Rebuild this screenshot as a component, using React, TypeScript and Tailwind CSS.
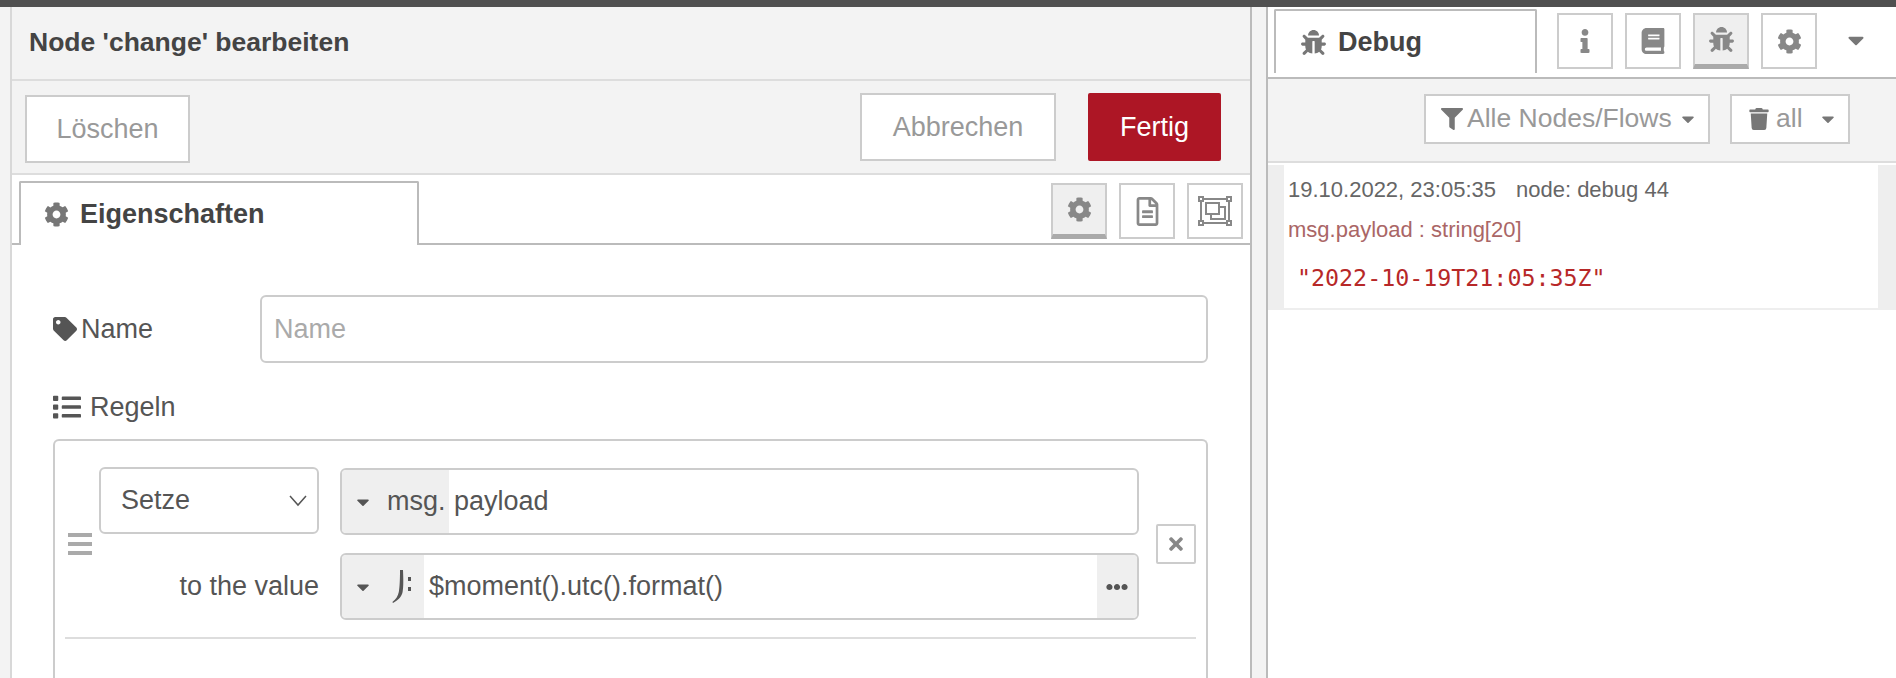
import { FaBook, FaBug, FaCaretDown, FaCog, FaEllipsisH, FaFilter, FaInfo, FaList, FaRegFileAlt, FaTag, FaTimes, FaTrash } from "react-icons/fa";
import { ReactNode } from "react";

function JsonataIcon() {
    return (
        <svg width="24" height="34" viewBox="0 0 24 34" fill="#555">
            <path d="M10 0h3c.4 9 .6 17-.4 22-.8 4-3.800 8-9.600 11l-.6-1c3.700-3 5.600-6 6.400-10 .9-5 1.200-13 1.200-22z" />
            <rect x="18" y="7" width="3" height="4" />
            <rect x="18" y="17" width="3" height="4" />
        </svg>
    );
}

function AppearanceIcon() {
    return (
        <svg width="34" height="30" viewBox="0 0 34 30" fill="none" stroke="#888" strokeWidth="2">
            <rect x="3" y="3" width="28" height="24" />
            <rect x="8" y="7" width="13" height="11" />
            <path d="M21 11h6v12H13v-5" />
            <rect x="1" y="1" width="4" height="4" fill="#fff" />
            <rect x="29" y="1" width="4" height="4" fill="#fff" />
            <rect x="1" y="25" width="4" height="4" fill="#fff" />
            <rect x="29" y="25" width="4" height="4" fill="#fff" />
        </svg>
    );
}

function IconButton({ children, active }: { children: ReactNode; active?: boolean }) {
    return (
        <div className={`flex h-full w-[56px] items-center justify-center border-2 border-[#ccc] text-[#888] ${active ? "border-b-[5px] border-b-[#aaa] bg-[#efefef] text-[#666]" : "bg-white"}`}>
            {children}
        </div>
    );
}

function EditPanel() {
    return (
        <div className="flex w-[1242px] flex-col border-l-2 border-r-2 border-l-[#d8d8d8] border-r-[#bbb] bg-white">
            <div className="flex h-[74px] items-center border-b-2 border-[#ddd] bg-[#f3f3f3] pl-[17px] text-[26.500px] font-bold text-[#444]">
                Node 'change' bearbeiten
            </div>
            <div className="flex h-[94px] items-start border-b-2 border-[#ddd] bg-[#f3f3f3] pl-[13px] pr-[29px] pt-[12px] text-[27px]">
                <div className="mt-[2px] flex h-[68px] w-[165px] items-center justify-center border-2 border-[#ccc] bg-white text-[#999]">Löschen</div>
                <div className="ml-auto flex h-[68px] w-[196px] items-center justify-center border-2 border-[#ccc] bg-white text-[#999]">Abbrechen</div>
                <div className="ml-[32px] flex h-[68px] w-[133px] items-center justify-center rounded-[2px] bg-[#ad1625] text-white">Fertig</div>
            </div>
            <div className="flex h-[70px] items-start border-b-2 border-[#bbb] pl-[7px] pr-[7px] pt-[6px]">
                <div className="flex h-[64px] w-[400px] items-center gap-[11px] rounded-t-[2px] border-2 border-b-0 border-[#bbb] bg-white pl-[23px] text-[27px] font-bold text-[#444]">
                    <FaCog size={25} className="text-[#777]" />
                    Eigenschaften
                </div>
                <div className="ml-auto mt-[2px] flex h-[56px] gap-[12px]">
                    <IconButton active><FaCog size={25} /></IconButton>
                    <IconButton><FaRegFileAlt size={29} /></IconButton>
                    <IconButton><AppearanceIcon /></IconButton>
                </div>
            </div>
            <div className="flex-1 overflow-hidden pl-[41px] pr-[42px] pt-[50px] text-[27px] text-[#555]">
                <div className="flex items-center">
                    <div className="flex w-[207px] items-center gap-[4px] pt-[0px]">
                        <FaTag size={24} />
                        Name
                    </div>
                    <div className="flex h-[68px] flex-1 items-center rounded-[6px] border-2 border-[#ccc] pl-[12px] text-[#aaa]">Name</div>
                </div>
                <div className="mt-[27px] flex h-[34px] items-center gap-[9px]">
                    <FaList size={28} />
                    Regeln
                </div>
                <div className="mt-[15px] h-[300px] rounded-t-[6px] border-2 border-b-0 border-[#ccc] px-[10px] pt-[26px]">
                    <div className="flex border-b-2 border-[#ddd] pb-[17px]">
                        <div className="flex w-[34px] flex-col justify-center gap-[5px] pl-[3px] pt-[0px]">
                            <div className="h-[4px] w-[24px] bg-[#aaa]" />
                            <div className="h-[4px] w-[24px] bg-[#aaa]" />
                            <div className="h-[4px] w-[24px] bg-[#aaa]" />
                        </div>
                        <div className="flex flex-1 flex-col gap-[18px]">
                            <div className="flex items-start">
                                <div className="flex h-[67px] w-[220px] items-center justify-between rounded-[6px] border-2 border-[#ccc] pl-[20px] pr-[10px]">
                                    Setze
                                    <svg width="18" height="12" viewBox="0 0 18 12" fill="none" stroke="#555" strokeWidth="1.500"><path d="M1 1l8 9 8-9" /></svg>
                                </div>
                                <div className="ml-[21px] mt-[1px] flex h-[67px] flex-1 overflow-hidden rounded-[6px] border-2 border-[#ccc]">
                                    <div className="flex w-[107px] items-center gap-[14px] bg-[#efefef] pl-[11px]">
                                        <FaCaretDown size={20} className="shrink-0" />
                                        msg.
                                    </div>
                                    <div className="flex items-center pl-[5px]">payload</div>
                                </div>
                            </div>
                            <div className="flex items-center">
                                <div className="w-[220px] pr-[0px] text-right">to the value</div>
                                <div className="ml-[21px] flex h-[67px] flex-1 overflow-hidden rounded-[6px] border-2 border-[#ccc]">
                                    <div className="flex w-[82px] items-center gap-[17px] bg-[#efefef] pl-[11px]">
                                        <FaCaretDown size={20} className="shrink-0" />
                                        <JsonataIcon />
                                    </div>
                                    <div className="flex flex-1 items-center pl-[5px]">$moment().utc().format()</div>
                                    <div className="flex w-[40px] items-center justify-center bg-[#efefef]"><FaEllipsisH size={22} /></div>
                                </div>
                            </div>
                        </div>
                        <div className="ml-[17px] flex w-[40px] items-center">
                            <div className="flex h-[40px] w-[40px] items-center justify-center rounded-[2px] border-2 border-[#ccc] text-[#888]"><FaTimes size={20} /></div>
                        </div>
                    </div>
                </div>
            </div>
        </div>
    );
}

function Sidebar() {
    return (
        <div className="flex flex-1 flex-col border-l-2 border-[#bbb] bg-white">
            <div className="flex h-[72px] items-start border-b-2 border-[#bbb] pl-[6px] pt-[2px]">
                <div className="flex h-[64px] w-[263px] items-center gap-[12px] rounded-t-[2px] border-2 border-b-0 border-[#bbb] bg-white pl-[25px] text-[27px] font-bold text-[#444]">
                    <FaBug size={25} className="text-[#777]" />
                    Debug
                </div>
                <div className="ml-[20px] mt-[4px] flex h-[56px] items-stretch gap-[12px]">
                    <IconButton><FaInfo size={24} /></IconButton>
                    <IconButton><FaBook size={26} /></IconButton>
                    <IconButton active><FaBug size={25} /></IconButton>
                    <IconButton><FaCog size={25} /></IconButton>
                </div>
                <FaCaretDown size={26} className="ml-[26px] mt-[18px] text-[#777]" />
            </div>
            <div className="flex h-[84px] items-start justify-end gap-[20px] border-b-2 border-[#ddd] bg-[#f3f3f3] pr-[46px] pt-[15px] text-[26.500px] text-[#999]">
                <div className="flex h-[50px] w-[286px] items-center gap-[4px] border-2 border-[#ccc] bg-white pl-[15px]">
                    <FaFilter size={22} className="text-[#777]" />
                    Alle Nodes/Flows
                    <FaCaretDown size={20} className="ml-auto mr-[10px] text-[#777]" />
                </div>
                <div className="flex h-[50px] w-[120px] items-center gap-[6px] border-2 border-[#ccc] bg-white pl-[16px]">
                    <FaTrash size={22} className="text-[#777]" />
                    all
                    <FaCaretDown size={20} className="ml-auto mr-[10px] text-[#777]" />
                </div>
            </div>
            <div className="mt-[2px] flex h-[145px] border-b-2 border-[#eee] bg-[#eee]">
                <div className="ml-[16px] flex-1 bg-white pl-[4px] pt-[12px] text-[22px] leading-[26px]">
                    <div className="text-[#666]">19.10.2022, 23:05:35<span className="ml-[20px]">node: debug 44</span></div>
                    <div className="mt-[14px] text-[#a66]">msg.payload : string[20]</div>
                    <div className="mt-[22px] pl-[9px] font-['DejaVu_Sans_Mono',monospace] text-[23.300px] text-[#b72828]">"2022-10-19T21:05:35Z"</div>
                </div>
                <div className="w-[18px]" />
            </div>
        </div>
    );
}

export default function App() {
    return (
        <div className="flex h-[678px] w-[1896px] flex-col overflow-hidden bg-white font-['Liberation_Sans',Arial,sans-serif]">
            <div className="h-[7px] shrink-0 bg-[#505050]" />
            <div className="flex min-h-0 flex-1">
                <div className="w-[10px] bg-[#f3f3f3]" />
                <EditPanel />
                <div className="w-[14px] bg-[#f3f3f3]" />
                <Sidebar />
            </div>
        </div>
    );
}
